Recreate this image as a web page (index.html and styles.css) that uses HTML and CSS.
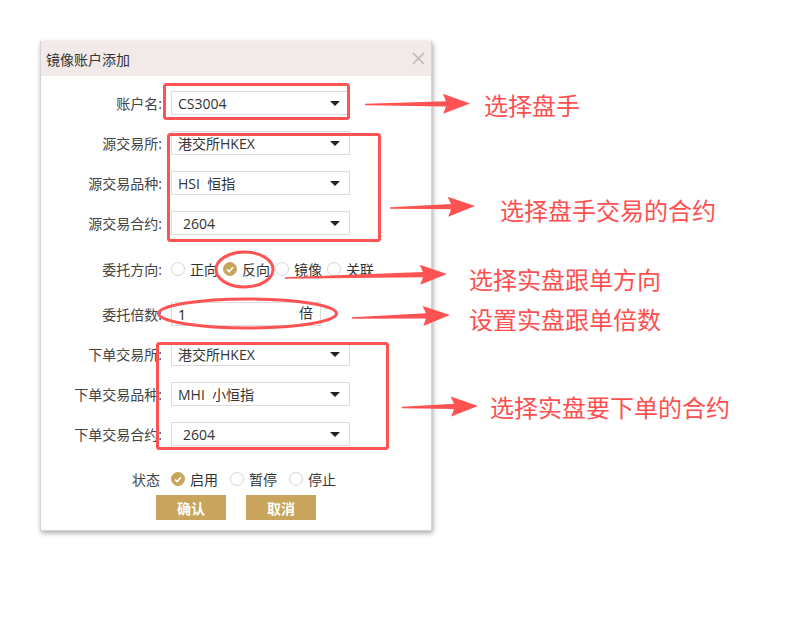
FILE: index.html
```html
<!DOCTYPE html>
<html lang="zh">
<head>
<meta charset="utf-8">
<title>镜像账户添加</title>
<link rel="stylesheet" href="styles.css">
</head>
<body>
<div class="page">
  <div class="dialog">
    <div class="dlg-head">
      <span class="dlg-title">镜像账户添加</span>
      <svg class="dlg-close" width="13" height="13" viewBox="0 0 13 13"><path d="M1 1L12 12M12 1L1 12" stroke="#b8b8b8" stroke-width="1.6" fill="none"/></svg>
    </div>
    <div class="dlg-body">
      <div class="row r-first">
        <label class="lbl">账户名:</label>
        <div class="sel"><span>CS3004</span><i class="caret"></i></div>
      </div>
      <div class="row">
        <label class="lbl">源交易所:</label>
        <div class="sel"><span>港交所HKEX</span><i class="caret"></i></div>
      </div>
      <div class="row">
        <label class="lbl">源交易品种:</label>
        <div class="sel"><span class="pre">HSI  恒指</span><i class="caret"></i></div>
      </div>
      <div class="row">
        <label class="lbl">源交易合约:</label>
        <div class="sel"><span class="num">2604</span><i class="caret"></i></div>
      </div>
      <div class="row r-radio">
        <label class="lbl">委托方向:</label>
        <div class="radios">
          <span class="radio"><i class="dot"></i>正向</span>
          <span class="radio"><i class="dot on"><svg width="8" height="7" viewBox="0 0 8 7"><path d="M1 3.5L3.2 5.6L7 1.3" stroke="#fff" stroke-width="1.7" fill="none"/></svg></i>反向</span>
          <span class="radio"><i class="dot"></i>镜像</span>
          <span class="radio"><i class="dot"></i>关联</span>
        </div>
      </div>
      <div class="row r-mult">
        <label class="lbl">委托倍数:</label>
        <div class="inp"><span>1</span><span class="unit">倍</span></div>
      </div>
      <div class="row r-after">
        <label class="lbl">下单交易所:</label>
        <div class="sel"><span>港交所HKEX</span><i class="caret"></i></div>
      </div>
      <div class="row">
        <label class="lbl">下单交易品种:</label>
        <div class="sel"><span class="pre">MHI  小恒指</span><i class="caret"></i></div>
      </div>
      <div class="row">
        <label class="lbl">下单交易合约:</label>
        <div class="sel"><span class="num">2604</span><i class="caret"></i></div>
      </div>
      <div class="row r-status">
        <label class="lbl lbl-plain">状态</label>
        <div class="radios wide">
          <span class="radio"><i class="dot on"><svg width="8" height="7" viewBox="0 0 8 7"><path d="M1 3.5L3.2 5.6L7 1.3" stroke="#fff" stroke-width="1.7" fill="none"/></svg></i>启用</span>
          <span class="radio"><i class="dot"></i>暂停</span>
          <span class="radio"><i class="dot"></i>停止</span>
        </div>
      </div>
      <div class="btns">
        <button class="btn">确认</button>
        <button class="btn">取消</button>
      </div>
    </div>
  </div>

  <svg class="notes" width="803" height="623" viewBox="0 0 803 623">
    <g fill="none" stroke="#ff5252" stroke-width="3">
      <rect x="164.5" y="84.5" width="184" height="34" rx="2"/>
      <rect x="168.5" y="134.5" width="211" height="106" rx="2"/>
      <rect x="157.5" y="343.5" width="230" height="105" rx="2"/>
      <ellipse cx="244.5" cy="269.5" rx="28.5" ry="17.5"/>
      <ellipse cx="247.5" cy="313.5" rx="89" ry="14.5"/>
    </g>
    <g fill="#ff5252">
      <polygon transform="translate(365 104.5) rotate(-0.5)" points="0,-0.8 81,-2.6 78,-10 105,0 78,10 81,2.6 0,0.8"/>
      <polygon transform="translate(390 208) rotate(-1.3)" points="0,-0.8 61,-2.6 58,-10 85,0 58,10 61,2.6 0,0.8"/>
      <polygon transform="translate(285 278) rotate(-1.4)" points="0,-0.8 138,-2.6 135,-10 162,0 135,10 138,2.6 0,0.8"/>
      <polygon transform="translate(352 318) rotate(-1.7)" points="0,-0.8 74,-2.6 71,-10 98,0 71,10 74,2.6 0,0.8"/>
      <polygon transform="translate(402 407.5) rotate(-1.2)" points="0,-0.8 52,-2.6 49,-10 76,0 49,10 52,2.6 0,0.8"/>
    </g>
    <g class="note-text" fill="#ff4f4f">
      <text x="484" y="104" dominant-baseline="central">选择盘手</text>
      <text x="500" y="209" dominant-baseline="central">选择盘手交易的合约</text>
      <text x="469" y="278" dominant-baseline="central">选择实盘跟单方向</text>
      <text x="469" y="318" dominant-baseline="central">设置实盘跟单倍数</text>
      <text x="490" y="406" dominant-baseline="central">选择实盘要下单的合约</text>
    </g>
  </svg>
</div>
</body>
</html>
```
FILE: styles.css
```css
* { box-sizing: border-box; }
html, body { margin: 0; padding: 0; background: #fff; }
body {
  font-family: "Open Sans", "Noto Sans CJK SC", sans-serif;
  font-size: 14px;
  color: #333;
}
.page { position: relative; width: 803px; height: 623px; overflow: hidden; }

.dialog {
  margin: 41px 0 0 40px;
  width: 392px;
  background: #fff;
  border: 1px solid #d4d4d4;
  border-top: none;
  box-shadow: 1px 2px 5px rgba(0,0,0,0.35);
}
.dlg-head {
  height: 35px;
  background: #f1eae8;
  display: flex;
  align-items: center;
  justify-content: space-between;
  padding: 0 6px 0 5px;
}
.dlg-title { font-size: 14px; color: #333; }
.dlg-close { display: block; margin-top: -1px; }

.dlg-body { padding: 15px 0 10px; }
.row {
  display: grid;
  grid-template-columns: 121px auto;
  column-gap: 9px;
  align-items: center;
  height: 24px;
  margin-top: 16px;
}
.r-first { margin-top: 0; }
.r-radio { margin-top: 22px; }
.r-mult { margin-top: 21px; }
.r-status { margin-top: 21px; }
.lbl { text-align: right; color: #444; font-size: 14px; white-space: nowrap; }
.lbl-plain { padding-right: 2px; }

.sel {
  width: 179px;
  height: 24px;
  border: 1px solid #dcdcdc;
  display: flex;
  align-items: center;
  justify-content: space-between;
  padding: 0 9px 0 6px;
  color: #333;
  font-size: 14px;
}
.sel .pre { white-space: pre; }
.sel .num { padding-left: 5px; }
.caret {
  width: 0; height: 0;
  border-left: 5px solid transparent;
  border-right: 5px solid transparent;
  border-top: 5px solid #222;
}

.inp {
  width: 150px;
  height: 24px;
  border: 1px solid #dcdcdc;
  display: flex;
  justify-content: space-between;
  align-items: flex-start;
  padding: 2px 7px 0 6px;
  color: #222;
}
.inp .unit { margin-top: -3px; color: #333; }

.radios { display: flex; align-items: center; gap: 5px; color: #333; }
.radios.wide { gap: 12px; }
.radio { display: flex; align-items: center; gap: 5px; }
.dot {
  width: 14px; height: 14px;
  border-radius: 50%;
  border: 1px solid #d6d6d6;
  background: #fff;
  display: flex;
  align-items: center;
  justify-content: center;
}
.dot.on { background: #c9a45c; border-color: #c9a45c; }
.dot svg { display: block; }

.btns {
  display: flex;
  justify-content: center;
  gap: 20px;
  margin-top: 4px;
}
.btn {
  width: 70px;
  height: 25px;
  border: none;
  background: #c9a45c;
  color: #fff;
  font-family: "Noto Sans CJK SC", sans-serif;
  font-size: 14px;
  font-weight: bold;
  padding: 0;
}

.notes { position: absolute; left: 0; top: 0; pointer-events: none; }
.note-text { font-family: "Noto Sans CJK SC", sans-serif; font-size: 24px; }
```
